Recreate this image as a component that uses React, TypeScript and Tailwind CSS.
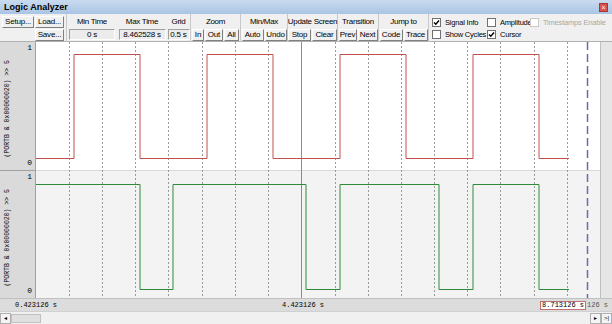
import React from "react";

const font = { fontFamily: '"Liberation Sans", Arial, sans-serif' };
const mono = { fontFamily: '"Liberation Mono", "Courier New", monospace' };

const Btn = ({ label, w }: { label: string; w: string }) => (
  <div
    className={`${w} h-[12px] shrink-0 flex items-center justify-center bg-[#f0f0f0] border border-t-white border-l-white border-r-[#808080] border-b-[#808080] text-[8px] leading-none text-black whitespace-nowrap tracking-[-0.2px]`}
  >
    {label}
  </div>
);

const Box = ({ value, w }: { value: string; w: string }) => (
  <div
    className={`${w} h-[11px] shrink-0 flex items-center justify-center bg-[#ececec] border border-t-[#a0a0a0] border-l-[#a0a0a0] border-r-white border-b-white text-[8px] leading-none whitespace-nowrap tracking-[-0.2px]`}
  >
    {value}
  </div>
);

const Group = ({
  title,
  children,
  className = "",
}: {
  title: string;
  children: React.ReactNode;
  className?: string;
}) => (
  <div className={`shrink-0 flex flex-col items-center border-r border-[#c8c8c8] -mt-[2px] pt-[1px] h-[28px] ${className}`}>
    <div className="h-[14px] flex items-center text-[8px] leading-none text-black whitespace-nowrap tracking-[-0.3px]">
      {title}
    </div>
    <div className="flex gap-[1px]">{children}</div>
  </div>
);

const Check = ({ label, checked, disabled }: { label: string; checked?: boolean; disabled?: boolean }) => (
  <div
    className={`flex items-center gap-[4px] text-[7.5px] leading-none whitespace-nowrap tracking-[-0.2px] ${disabled ? "text-[#a8a8a8]" : "text-black"}`}
  >
    <div
      className={`w-[9px] h-[9px] shrink-0 border flex items-center justify-center bg-white ${disabled ? "border-[#c8c8c8]" : "border-[#707070]"}`}
    >
      {checked && (
        <svg width="7" height="7" viewBox="0 0 7 7">
          <path d="M1 3.5 L2.8 5.3 L6 1.5" stroke="#000" strokeWidth="1.4" fill="none" />
        </svg>
      )}
    </div>
    {label}
  </div>
);

// waveform edges, x in page coords
const red = [
  [36, 0], [74, 1], [140, 0], [207, 1], [273, 0], [340, 1], [406, 0], [473, 1], [539, 0], [569, 0],
];
const green = [
  [36, 1], [140, 0], [173, 1], [306, 0], [340, 1], [439, 0], [473, 1], [539, 0], [569, 0],
];

const stepPath = (pts: number[][], hi: number, lo: number) => {
  let d = "";
  pts.forEach(([x, v], i) => {
    const y = v ? hi : lo;
    const px = x - 36;
    if (i === 0) d += `M${px} ${y}`;
    else d += ` L${px} ${pts[i - 1][1] ? hi : lo} L${px} ${y}`;
  });
  return d;
};

const gridXs = [69, 102, 135, 168, 202, 235, 268, 335, 368, 401, 434, 467, 500, 534, 567];

const SignalLabel = () => (
  <div className="relative flex-1 bg-[#dadada] border-r border-[#a0a0a0]">
    <div className="absolute top-[2px] right-[3px] text-[8px] leading-none" style={mono}>1</div>
    <div className="absolute bottom-[3px] right-[3px] text-[8px] leading-none" style={mono}>0</div>
    <div
      className="absolute left-[4px] bottom-[12px] text-[6.5px] leading-none whitespace-nowrap origin-bottom-left -rotate-90 translate-x-[7px]"
      style={mono}
    >
      (PORTB &amp; 0x00000020) &gt;&gt; 5
    </div>
  </div>
);

export default function App() {
  return (
    <div className="w-[612px] h-[324px] flex flex-col bg-[#f0f0f0] overflow-hidden" style={font}>
      {/* Title */}
      <div className="h-[14px] flex items-center justify-between px-[4px] bg-gradient-to-b from-[#c9dbef] to-[#a9c4e4]">
        <span className="text-[9px] font-bold leading-none text-black">Logic Analyzer</span>
        <div className="w-[9px] h-[9px] bg-[#d9534f] border border-[#a33] flex items-center justify-center text-white text-[7px] leading-none">
          ×
        </div>
      </div>

      {/* Toolbar */}
      <div className="h-[28px] flex items-start pt-[2px] pl-[2px] border-b border-[#b0b0b0]">
        <div className="shrink-0 flex gap-[1px] border-r border-[#c8c8c8] pr-[2px] -mt-[2px] pt-[2px] h-[28px]">
          <Btn label="Setup..." w="w-[32px]" />
          <div className="flex flex-col gap-[1px]">
            <Btn label="Load..." w="w-[29px]" />
            <Btn label="Save..." w="w-[29px]" />
          </div>
        </div>
        <Group title="Min Time" className="w-[50px] border-r-0">
          <Box value="0 s" w="w-[46px]" />
        </Group>
        <Group title="Max Time" className="w-[50px] border-r-0">
          <Box value="8.462528 s" w="w-[47px]" />
        </Group>
        <Group title="Grid" className="w-[24px]">
          <Box value="0.5 s" w="w-[22px]" />
        </Group>
        <Group title="Zoom" className="w-[50px]">
          <Btn label="In" w="w-[12px]" />
          <Btn label="Out" w="w-[18px]" />
          <Btn label="All" w="w-[15px]" />
        </Group>
        <Group title="Min/Max" className="w-[47px]">
          <Btn label="Auto" w="w-[22px]" />
          <Btn label="Undo" w="w-[22px]" />
        </Group>
        <Group title="Update Screen" className="w-[50px]">
          <Btn label="Stop" w="w-[23px]" />
          <Btn label="Clear" w="w-[25px]" />
        </Group>
        <Group title="Transition" className="w-[41px]">
          <Btn label="Prev" w="w-[18px]" />
          <Btn label="Next" w="w-[20px]" />
        </Group>
        <Group title="Jump to" className="w-[50px]">
          <Btn label="Code" w="w-[23px]" />
          <Btn label="Trace" w="w-[24px]" />
        </Group>
        <div className="shrink-0 grid grid-cols-[55px_43px_auto] gap-y-[3px] pl-[3px] pt-[2px]">
          <Check label="Signal Info" checked />
          <Check label="Amplitude" />
          <Check label="Timestamps Enable" disabled />
          <Check label="Show Cycles" />
          <Check label="Cursor" checked />
        </div>
      </div>

      {/* Plot area */}
      <div className="h-[256px] flex">
        <div className="w-[36px] flex flex-col">
          <SignalLabel />
          <div className="h-[1px] bg-[#a0a0a0]" />
          <SignalLabel />
        </div>
        <div className="flex-1 relative">
          <svg width="564" height="256" className="block">
            <rect x="0" y="0" width="564" height="128" fill="#ffffff" />
            <rect x="0" y="128" width="564" height="1" fill="#d8d8d8" />
            <rect x="0" y="129" width="564" height="127" fill="#f3f3f3" />
            {gridXs.map((x) => (
              <line
                key={x}
                x1={x - 36 + 0.5}
                y1="0"
                x2={x - 36 + 0.5}
                y2="256"
                stroke="#9a9a9a"
                strokeWidth="1"
                strokeDasharray="2 2"
              />
            ))}
            <line x1={301 - 36 + 0.5} y1="0" x2={301 - 36 + 0.5} y2="256" stroke="#8c8c8c" strokeWidth="1" />
            <path d={stepPath(red, 54 - 42 + 0.5, 158 - 42 + 0.5)} stroke="#c0504d" strokeWidth="1" fill="none" />
            <path d={stepPath(green, 184 - 42 + 0.5, 289 - 42 + 0.5)} stroke="#2e8b3a" strokeWidth="1" fill="none" />
            <line
              x1={587 - 36 + 0.5}
              y1="0"
              x2={587 - 36 + 0.5}
              y2="256"
              stroke="#6a6ab0"
              strokeWidth="1.5"
              strokeDasharray="8 4"
            />
          </svg>
        </div>
        <div className="w-[12px] bg-[#e6e6e6] border-l border-[#c0c0c0]" />
      </div>

      {/* Time axis */}
      <div className="h-[13px] flex items-center bg-[#dcdcdc] border-t border-[#c0c0c0] text-[7px] leading-none" style={mono}>
        <span className="ml-[15px]">0.423126 s</span>
        <span className="ml-[225px]">4.423126 s</span>
        <span className="ml-[216px] px-[1px] bg-white border border-[#c07070]">8.713126 s</span>
        <span className="ml-[1px] text-[#555]">126 s</span>
      </div>

      {/* Scrollbar */}
      <div className="h-[13px] flex items-center bg-[#f0f0f0] border-t border-[#d0d0d0]">
        <div className="w-[11px] h-[11px] flex items-center justify-center text-[6px] border border-[#b0b0b0] bg-[#f4f4f4]">◂</div>
        <div className="w-[30px] h-[9px] bg-[#e0e0e0] border border-[#c0c0c0]" />
        <div className="flex-1" />
        <div className="w-[11px] h-[11px] flex items-center justify-center text-[6px] border border-[#b0b0b0] bg-[#f4f4f4]">▸</div>
        <div className="w-[11px] h-[11px] flex items-center justify-center text-[6px] border border-[#b0b0b0] bg-[#f4f4f4]">&gt;|</div>
      </div>
    </div>
  );
}
